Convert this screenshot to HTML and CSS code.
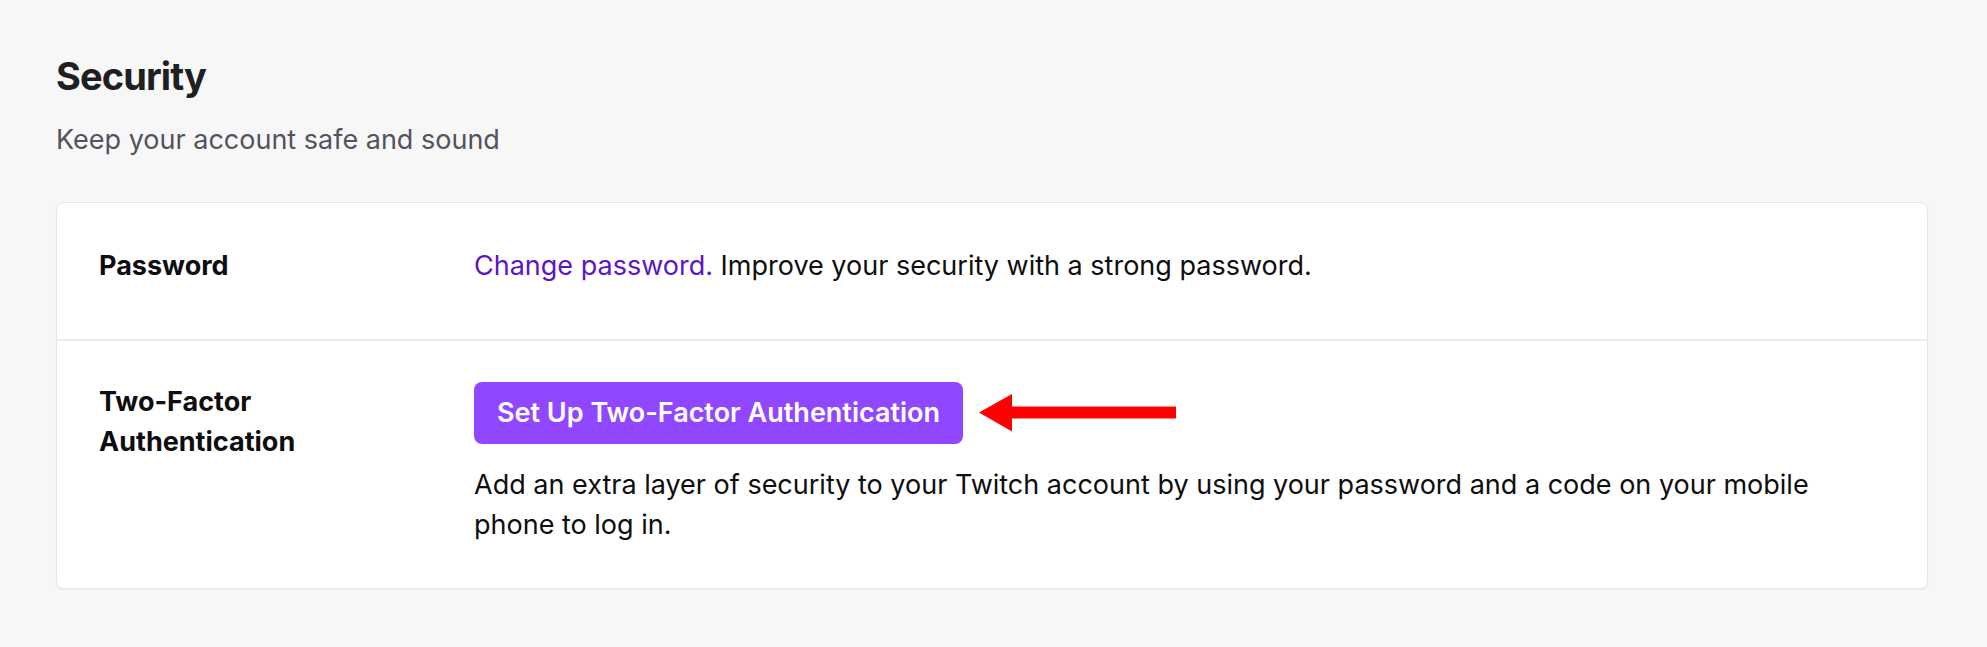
FILE: index.html
```html
<!DOCTYPE html>
<html lang="en">
<head>
<meta charset="utf-8">
<title>Security</title>
<link rel="stylesheet" href="styles.css">
</head>
<body>
<main class="page">
  <h1 class="title">Security</h1>
  <p class="subtitle">Keep your account safe and sound</p>
  <section class="card">
    <div class="row row-first">
      <div class="label">Password</div>
      <div class="value"><a class="link" href="#">Change password.</a> Improve your security with a strong password.</div>
    </div>
    <div class="row row-last">
      <div class="label">Two-Factor<br>Authentication</div>
      <div class="value">
        <div class="action">
          <button class="btn" type="button">Set Up Two-Factor Authentication</button>
          <svg class="arrow" width="198" height="38" viewBox="0 0 198 38" aria-hidden="true">
            <polygon points="0,18.5 33,0 33,12.5 197,12.5 197,24.5 33,24.5 33,37.5" fill="#ff0000"/>
          </svg>
        </div>
        <p class="desc">Add an extra layer of security to your Twitch account by using your password and a code on your mobile phone to log in.</p>
      </div>
    </div>
  </section>
</main>
</body>
</html>
```

FILE: styles.css
```css
html, body {
  margin: 0;
  padding: 0;
  background: #f7f7f8;
}

body {
  font-family: Inter, "Noto Sans", "Liberation Sans", sans-serif;
  color: #0e0e10;
  height: 647px;
  overflow: hidden;
}

.page {
  padding: 52px 59px 0 56px;
}

.title {
  margin: 0;
  font-size: 38px;
  line-height: 48px;
  font-weight: 700;
  letter-spacing: -0.9px;
  color: #1f1f23;
}

.subtitle {
  margin: 20px 0 0;
  font-size: 27px;
  line-height: 40px;
  color: #53535f;
}

.card {
  margin-top: 42px;
  background: #ffffff;
  border: 1px solid #e6e6ea;
  border-radius: 7px;
  box-shadow: 0 1px 2px rgba(0, 0, 0, 0.04);
}

.row {
  display: grid;
  grid-template-columns: 375px 1fr;
  padding: 43px 43px 53px 42px;
  font-size: 27px;
  line-height: 40px;
}

.row-last {
  border-top: 2px solid #ebebee;
  padding: 41px 43px 43px 42px;
}

.label {
  font-weight: 700;
  color: #0e0e10;
}

.value {
  color: #0e0e10;
}

.link {
  color: #5c16c5;
  text-decoration: none;
}

.action {
  display: flex;
  align-items: center;
  gap: 16px;
}

.btn {
  height: 62px;
  padding: 0 23px;
  border: 0;
  border-radius: 8px;
  background: #9147ff;
  color: #ffffff;
  font-family: inherit;
  font-size: 27px;
  font-weight: 600;
  line-height: 62px;
  cursor: pointer;
}

.arrow {
  display: block;
}

.desc {
  margin: 21px 0 0;
}
```
